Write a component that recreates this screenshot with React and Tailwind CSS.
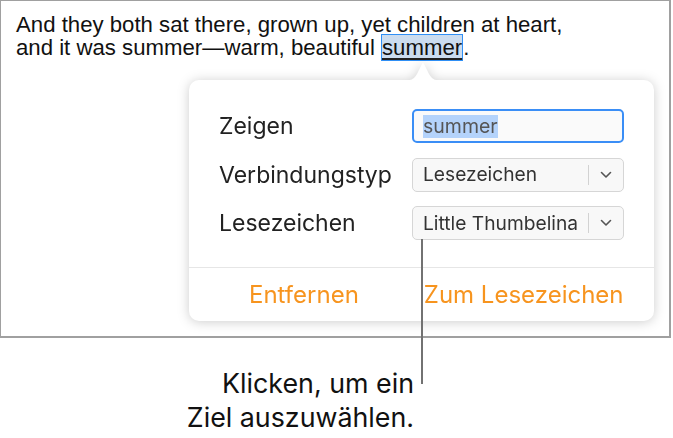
export default function App() {
  const Chevron = () => (
    <svg width="12" height="8" viewBox="0 0 12 8">
      <path d="M1.5 1.5 L6 6 L10.5 1.5" fill="none" stroke="#555" strokeWidth="1.6" strokeLinecap="round" strokeLinejoin="round" />
    </svg>
  );
  const Select = ({ value }) => (
    <div className="flex items-center h-[34px] rounded-[5px] border border-[#d6d6d6] bg-[#f8f8f8] pl-[10px]">
      <span className="flex-1 text-[19.2px] text-[#333] whitespace-nowrap">{value}</span>
      <span className="w-px h-[20px] bg-[#d2d2d2]"></span>
      <span className="w-[34px] flex justify-center items-center">
        <Chevron />
      </span>
    </div>
  );
  return (
    <div className="w-[673px] h-[438px] bg-white relative overflow-hidden">
      <div className="w-[671px] h-[338px] border-[#a0a0a0] border-l border-t border-r-2 border-b-2">
        <p className="pt-[12px] pl-[15px] text-[22.2px] leading-[23px] text-[#111] font-['Liberation_Sans',Arial,sans-serif]">
          And they both sat there, grown up, yet children at heart,
          <br />
          and it was summer—warm, beautiful{" "}
          <span className="border border-[#2f8ff5] bg-[#cbdcef] underline decoration-[#222] underline-offset-[3px]">summer</span>.
        </p>
        <div className="relative ml-[188px] mt-[21px] w-[465px] h-[241px] rounded-[10px] bg-white drop-shadow-[0_1px_6px_rgba(0,0,0,0.2)] font-['Inter',sans-serif]">
          <svg className="absolute left-[213px] top-[-19px]" width="42" height="20" viewBox="0 0 42 20">
            <path d="M0 20 C9 20 12 18 15 13 L20 3 Q21 1 22 3 L27 13 C30 18 33 20 42 20 Z" fill="#ffffff" />
          </svg>
          <div className="pt-[29px] px-[30px] pb-[26px] flex flex-col gap-[14px]">
            <div className="grid grid-cols-[193px_212px] items-center">
              <span className="text-[23px] text-[#222]">Zeigen</span>
              <div className="flex items-center h-[34px] rounded-[5px] border-2 border-[#3a8ef6] bg-[#fafafa] pl-[9px]">
                <span className="text-[19.5px] leading-[23px] text-[#555] bg-[#b4d3fb]">summer</span>
              </div>
            </div>
            <div className="grid grid-cols-[193px_212px] items-center">
              <span className="text-[23px] text-[#222]">Verbindungstyp</span>
              <Select value="Lesezeichen" />
            </div>
            <div className="grid grid-cols-[193px_212px] items-center">
              <span className="text-[23px] text-[#222]">Lesezeichen</span>
              <Select value="Little Thumbelina" />
            </div>
          </div>
          <div className="h-px bg-[#e6e6e6]"></div>
          <div className="h-[55px] flex items-center pl-[60px] gap-[65px] text-[24px] text-[#f7941e]">
            <span>Entfernen</span>
            <span>Zum Lesezeichen</span>
          </div>
        </div>
      </div>
      <div className="w-[414px] mt-[28px] text-right text-[26.8px] leading-[34px] text-[#111] font-['Inter',sans-serif]">
        Klicken, um ein
        <br />
        Ziel auszuwählen.
      </div>
      <div className="absolute left-[421px] top-[239px] w-[2px] h-[145px] bg-[#727272]"></div>
    </div>
  );
}
